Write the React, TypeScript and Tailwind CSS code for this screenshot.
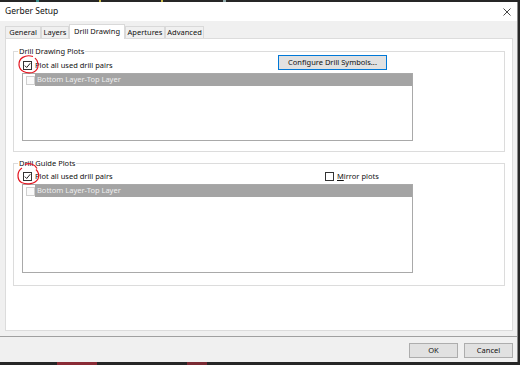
import React from "react";

const font = { fontFamily: '"Noto Sans", "Open Sans", sans-serif' };

const Check = ({ checked, light }: { checked?: boolean; light?: boolean }) => (
  <span
    className={
      "relative flex h-[9px] w-[9px] shrink-0 items-center justify-center border " +
      (light ? "border-[#cfcfcf] bg-[#fafafa]" : "border-[#333333] bg-white")
    }
  >
    {checked && (
      <svg width="7" height="7" viewBox="0 0 7 7">
        <path d="M0.8 3.6 L2.7 5.5 L6.3 1.2" fill="none" stroke="#222" strokeWidth="1" />
      </svg>
    )}
  </span>
);

const ListBox = ({ height }: { height: string }) => (
  <div className={"ml-[8px] w-[391px] border border-[#a9a9a9] bg-white " + height}>
    <div className="flex h-[12px]">
      <div className="flex w-[12px] shrink-0 items-center pl-[3px]">
        <Check light />
      </div>
      <div className="flex flex-1 items-center bg-[#a4a4a4] pl-[2px] text-[7.5px] leading-none text-[#eeeeee]">
        Bottom Layer-Top Layer
      </div>
    </div>
  </div>
);

const tabs = [
  { name: "General", w: "w-[36px]" },
  { name: "Layers", w: "w-[28px]" },
  { name: "Drill Drawing", w: "w-[56px]", active: true },
  { name: "Apertures", w: "w-[40px]" },
  { name: "Advanced", w: "w-[39px]" },
];

export default function App() {
  return (
    <div className="relative h-[365px] w-[520px] overflow-hidden bg-[#262626] text-[#111]" style={font}>
      {/* screen strip above */}
      <div className="flex h-[2px] gap-[60px] pl-[36px]">
        <span className="h-full w-[3px] bg-[#3a8f8f]" />
        <span className="h-full w-[2px] bg-[#c9b94a]" />
        <span className="h-full w-[2px] bg-[#c9b94a]" />
        <span className="h-full w-[3px] bg-[#8fa9a9]" />
      </div>

      <div className="flex h-[360px] w-[518px] flex-col border-r border-[#8a8a8a] bg-[#f0f0f0]">
        {/* title bar */}
        <div className="flex h-[19px] items-center justify-between bg-white pl-[5px] pr-[6px]">
          <span className="text-[8.5px] leading-none">Gerber Setup</span>
          <svg width="8" height="8" viewBox="0 0 8 8">
            <path d="M0.5 0.5 L7.5 7.5 M7.5 0.5 L0.5 7.5" stroke="#333" strokeWidth="0.9" />
          </svg>
        </div>

        {/* tabs */}
        <div className="flex h-[17px] items-end pl-[5px]">
          {tabs.map((t) => (
            <div
              key={t.name}
              className={
                "flex items-center justify-center border border-b-0 border-[#d9d9d9] text-[7.5px] leading-none " +
                t.w +
                (t.active
                  ? " relative z-10 mb-[-1px] h-[15px] bg-white"
                  : " h-[12px] bg-[#f0f0f0]")
              }
            >
              {t.name}
            </div>
          ))}
        </div>

        {/* tab panel */}
        <div className="ml-[5px] h-[293px] w-[508px] border border-[#dcdcdc] bg-white">
          {/* Drill Drawing Plots */}
          <div className="relative ml-[7px] mt-[12px] h-[101px] w-[492px] border border-[#dcdcdc]">
            <span className="absolute left-[4px] top-[-6px] bg-white px-[1px] text-[7.5px] leading-[11px]">
              Drill Drawing Plots
            </span>
            <div className="mt-[3px] flex h-[15px] items-end pl-[9px]">
              <div className="flex w-[255px] shrink-0 items-center gap-[3px]">
                <Check checked />
                <span className="text-[7.5px] leading-[9px]">Plot all used drill pairs</span>
              </div>
              <button className="flex h-[15px] w-[109px] items-center justify-center border border-[#0078d7] bg-[#e1e1e1] text-[7.5px] leading-none">
                Configure Drill Symbols...
              </button>
            </div>
            <div className="mt-[3px]">
              <ListBox height="h-[68px]" />
            </div>
          </div>

          {/* Drill Guide Plots */}
          <div className="relative ml-[7px] mt-[11px] h-[123px] w-[492px] border border-[#dcdcdc]">
            <span className="absolute left-[4px] top-[-6px] bg-white px-[1px] text-[7.5px] leading-[11px]">
              Drill Guide Plots
            </span>
            <div className="mt-[7px] flex h-[11px] items-center pl-[9px]">
              <div className="flex w-[302px] shrink-0 items-center gap-[3px]">
                <Check checked />
                <span className="text-[7.5px] leading-[9px]">Plot all used drill pairs</span>
              </div>
              <div className="flex items-center gap-[3px]">
                <Check />
                <span className="text-[7.5px] leading-[9px]">
                  <span className="underline">M</span>irror plots
                </span>
              </div>
            </div>
            <div className="mt-[2px]">
              <ListBox height="h-[89px]" />
            </div>
          </div>
        </div>

        {/* separator + buttons */}
        <div className="mt-[5px] h-[1px] bg-[#a0a0a0]" />
        <div className="flex flex-1 items-start justify-end gap-[6px] pr-[4px] pt-[6px]">
          <button className="flex h-[15px] w-[49px] items-center justify-center border border-[#adadad] bg-[#e1e1e1] text-[7.5px] leading-none">
            OK
          </button>
          <button className="flex h-[15px] w-[49px] items-center justify-center border border-[#adadad] bg-[#e1e1e1] text-[7.5px] leading-none">
            Cancel
          </button>
        </div>
      </div>

      {/* screen strip below */}
      <div className="flex h-[3px] gap-[90px] pl-[57px]">
        <span className="h-full w-[40px] bg-[#8a2b35]" />
        <span className="h-full w-[20px] bg-[#7a2a33]" />
      </div>

      {/* red hand-drawn annotations */}
      <svg className="pointer-events-none absolute left-0 top-0" width="60" height="200" viewBox="0 0 60 200">
        <path
          d="M33 56.5 C 25 54, 18.5 58.5, 19 65 C 19.5 71, 26 74, 32.5 72.5 C 38 71, 39.5 65, 37 60.5 L 35 58"
          fill="none"
          stroke="#e3141e"
          strokeWidth="1.2"
        />
        <path
          d="M25 164.5 C 30 162.5, 35 164.5, 37 168.5"
          fill="none"
          stroke="#e3141e"
          strokeWidth="1.2"
        />
        <path
          d="M22 168 C 17 171, 16.5 179.5, 21.5 182.5 C 27 185, 35 184, 38 179 C 39.5 175.5, 38.5 172, 36 169.5"
          fill="none"
          stroke="#e3141e"
          strokeWidth="1.2"
        />
      </svg>
    </div>
  );
}
